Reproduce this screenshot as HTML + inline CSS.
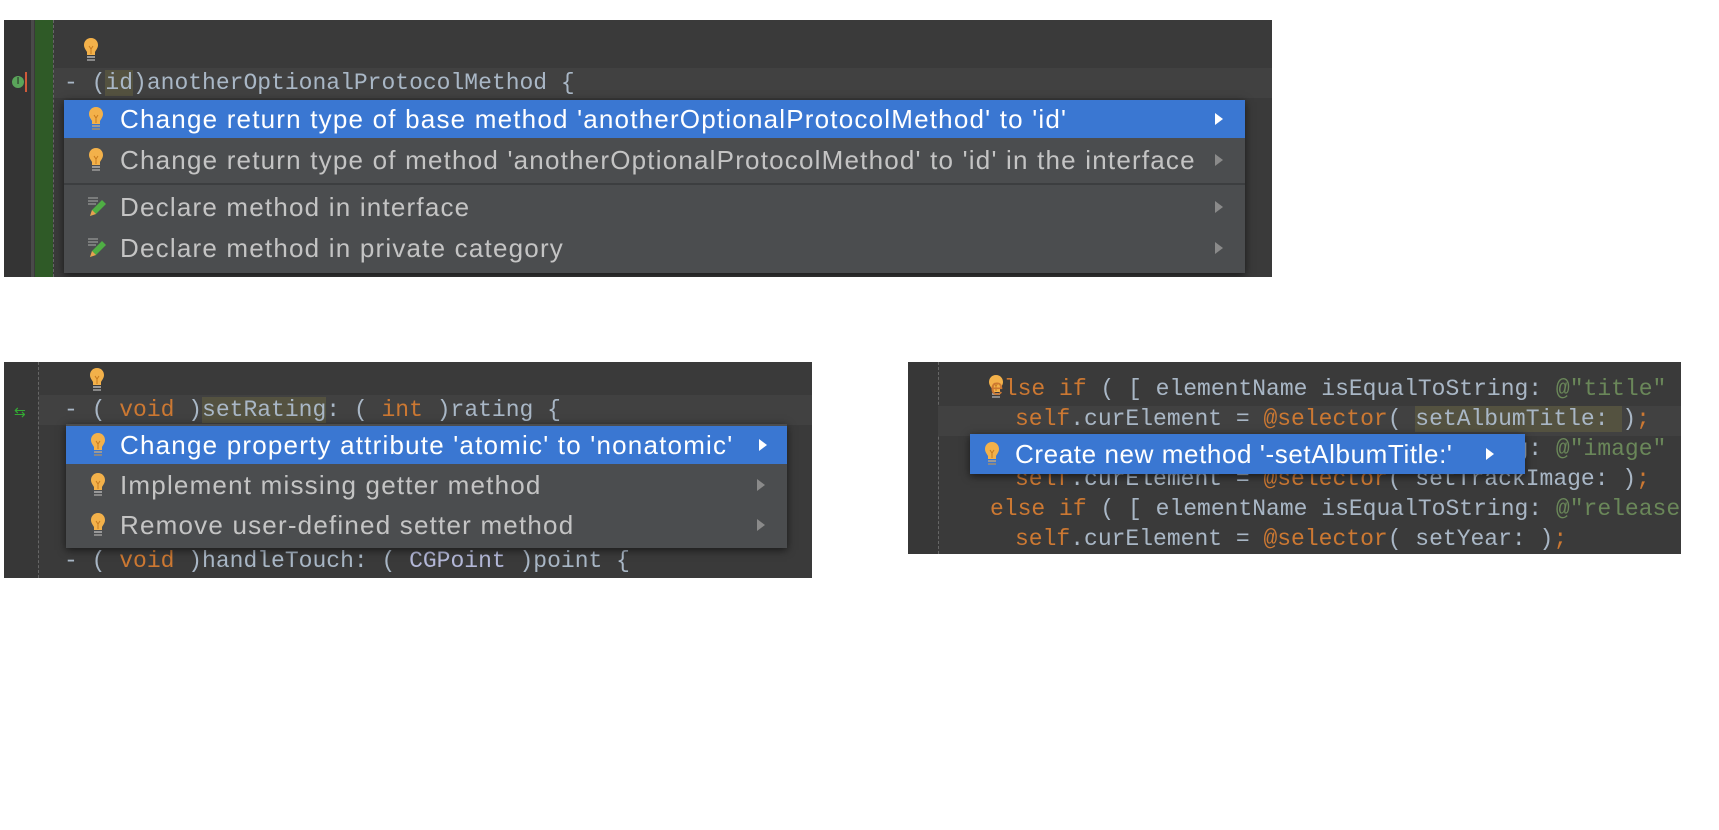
<!DOCTYPE html>
<html><head><meta charset="utf-8"><style>
body{margin:0;width:1719px;height:830px;background:#fff;position:relative;overflow:hidden;font-family:"Liberation Sans",sans-serif}
.p{position:absolute;background:#3a3a3a;overflow:hidden}
.a{position:absolute}
.code{position:absolute;font-family:"Liberation Mono",monospace;font-size:23px;color:#a9b7c6;white-space:pre;line-height:30px}
.k{color:#cc7832}.s{color:#6a8759}.t{color:#b4b8d8}
.hl{background:#545240}
.menu{position:absolute;background:#4b4d4f;box-shadow:0 2px 8px rgba(0,0,0,.6)}
.row{position:absolute;left:0;right:0;height:38px;font-size:26px;color:#c4c4c4;white-space:nowrap;line-height:38px}
.row.sel{background:#3a77d2;color:#fff}
.row span.tx{position:absolute;left:56px;letter-spacing:1.2px}
.arr{position:absolute;right:22px;top:13px;width:0;height:0;border-left:8px solid #8a8a8a;border-top:6px solid transparent;border-bottom:6px solid transparent}
.sel .arr{border-left-color:#fff}
.bulb{position:absolute;width:16px;height:26px}
</style></head><body>
<svg width="0" height="0" style="position:absolute"><defs>
<symbol id="b" viewBox="0 0 16 26"><path d="M8 1C3.5 1 1 4.5 1 8c0 3 2 5 3 7v3h8v-3c1-2 3-4 3-7 0-3.5-2.5-7-7-7z" fill="#f3b14a"/><path d="M6 9l2 3 2-3M8 12v5" stroke="#c77a1e" fill="none" stroke-width="1"/><rect x="4" y="19" width="8" height="2" fill="#999"/><rect x="4" y="22" width="8" height="2" fill="#888"/></symbol>
<symbol id="pen" viewBox="0 0 20 22"><path d="M2 2h10M2 5h10M2 8h8" stroke="#aaa" stroke-width="1"/><path d="M4 20l2-6 10-10 4 4-10 10z" fill="#4fae44"/><path d="M4 20l2-6 4 4z" fill="#e8a050"/></symbol>
</defs></svg>

<!-- Panel 1 -->
<div class="p" style="left:4px;top:20px;width:1268px;height:257px">
  <div class="a" style="left:0;top:0;width:27px;height:257px;background:#343434"></div>
  <div class="a" style="left:27px;top:0;width:3px;height:257px;background:#4a4a4a"></div>
  <div class="a" style="left:31px;top:0;width:18px;height:257px;background:#2f5a27"></div>
  <div class="a" style="left:49px;top:0;width:0;height:257px;border-left:1px dashed #666"></div>
  <div class="a" style="left:50px;top:48px;width:1218px;height:30px;background:#414141"></div>
  <svg class="bulb" style="left:79px;top:17px"><use href="#b"/></svg>
  <div class="a" style="left:8px;top:56px;width:12px;height:12px;border-radius:6px;background:#5aa55a;color:#222;font-size:10px;text-align:center;line-height:12px">I</div>
  <div class="a" style="left:21px;top:52px;width:2px;height:20px;background:#d05a3a"></div>
  <div class="code" style="left:60px;top:48px">- (<span class="hl">id</span>)anotherOptionalProtocolMethod {</div>
  <div class="menu" style="left:60px;top:80px;width:1181px;height:173px">
    <div class="row sel" style="top:0"><svg class="bulb" style="left:24px;top:6px"><use href="#b"/></svg><span class="tx">Change return type of base method 'anotherOptionalProtocolMethod' to 'id'</span><i class="arr"></i></div>
    <div class="row" style="top:41px"><svg class="bulb" style="left:24px;top:6px"><use href="#b"/></svg><span class="tx">Change return type of method 'anotherOptionalProtocolMethod' to 'id' in the interface</span><i class="arr"></i></div>
    <div class="a" style="left:0;right:0;top:83px;height:2px;background:#3c3e40"></div>
    <div class="row" style="top:88px"><svg class="bulb" style="left:22px;top:8px;width:20px;height:22px"><use href="#pen"/></svg><span class="tx">Declare method in interface</span><i class="arr"></i></div>
    <div class="row" style="top:129px"><svg class="bulb" style="left:22px;top:8px;width:20px;height:22px"><use href="#pen"/></svg><span class="tx">Declare method in private category</span><i class="arr"></i></div>
  </div>
</div>

<!-- Panel 2 -->
<div class="p" style="left:4px;top:362px;width:808px;height:216px">
  <div class="a" style="left:0;top:0;width:34px;height:216px;background:#373737"></div>
  <div class="a" style="left:34px;top:0;height:216px;border-left:1px dashed #666"></div>
  <div class="a" style="left:35px;top:33px;width:782px;height:30px;background:#414141"></div>
  <svg class="bulb" style="left:85px;top:5px"><use href="#b"/></svg>
  <div class="a" style="left:10px;top:42px;color:#3a3;font-size:14px">⇆</div>
  <div class="code" style="left:60px;top:33px">- ( <span class="k">void</span> )<span class="hl">setRating</span>: ( <span class="k">int</span> )rating {</div>
  <div class="code" style="left:60px;top:184px">- ( <span class="k">void</span> )handleTouch: ( <span class="t">CGPoint</span> )point {</div>
  <div class="menu" style="left:62px;top:62px;width:721px;height:124px">
    <div class="row sel" style="top:2px"><svg class="bulb" style="left:24px;top:6px"><use href="#b"/></svg><span class="tx" style="left:54px">Change property attribute 'atomic' to 'nonatomic'</span><i class="arr" style="right:20px"></i></div>
    <div class="row" style="top:42px"><svg class="bulb" style="left:24px;top:6px"><use href="#b"/></svg><span class="tx" style="left:54px">Implement missing getter method</span><i class="arr"></i></div>
    <div class="row" style="top:82px"><svg class="bulb" style="left:24px;top:6px"><use href="#b"/></svg><span class="tx" style="left:54px">Remove user-defined setter method</span><i class="arr"></i></div>
  </div>
</div>

<!-- Panel 3 -->
<div class="p" style="left:908px;top:362px;width:773px;height:192px">
  <div class="a" style="left:0;top:0;width:30px;height:192px;background:#373737"></div>
  <div class="a" style="left:30px;top:0;height:192px;border-left:1px dashed #666"></div>
  <div class="a" style="left:30px;top:44px;width:762px;height:30px;background:#414141"></div>
  <svg class="bulb" style="left:80px;top:12px"><use href="#b"/></svg>
  <div class="code" style="left:82px;top:12px"><span class="k">else if</span> ( [ elementName isEqualToString: <span class="s">@"title"</span></div>
  <div class="code" style="left:107px;top:42px"><span class="k">self</span>.curElement = <span class="k">@selector</span>( <span class="hl">setAlbumTitle: </span>)<span class="k">;</span></div>
  <div class="code" style="left:82px;top:72px">                                      g: <span class="s">@"image"</span></div>
  <div class="code" style="left:107px;top:102px"><span class="k">self</span>.curElement = <span class="k">@selector</span>( setTrackImage: )<span class="k">;</span></div>
  <div class="code" style="left:82px;top:132px"><span class="k">else if</span> ( [ elementName isEqualToString: <span class="s">@"release</span></div>
  <div class="code" style="left:107px;top:162px"><span class="k">self</span>.curElement = <span class="k">@selector</span>( setYear: )<span class="k">;</span></div>
  <div class="menu" style="left:62px;top:72px;width:555px;height:40px;background:#3a77d2">
    <div class="row sel" style="top:1px"><svg class="bulb" style="left:14px;top:6px"><use href="#b"/></svg><span class="tx" style="left:45px;letter-spacing:0.6px">Create new method '-setAlbumTitle:'</span><i class="arr" style="right:31px"></i></div>
  </div>
</div>
</body></html>
